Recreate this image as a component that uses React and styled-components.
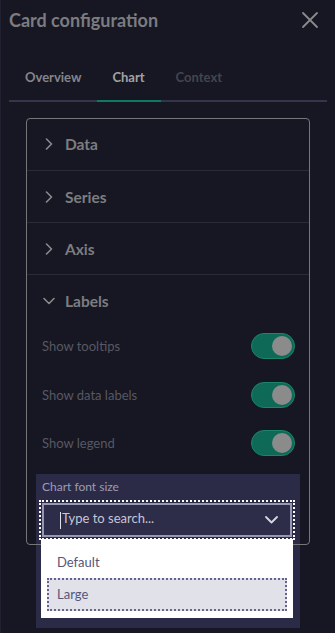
import React from 'react';
import styled, { createGlobalStyle } from 'styled-components';

const GlobalStyle = createGlobalStyle`
  html, body {
    margin: 0;
    padding: 0;
    background: #161722;
  }
  * {
    box-sizing: border-box;
  }
`;

const Panel = styled.div`
  width: 335px;
  height: 633px;
  background: #161722;
  font-family: Lato, 'Open Sans', sans-serif;
  overflow: hidden;
  border-left: 1px solid #202131;
`;

const Header = styled.div`
  height: 39px;
  display: flex;
  align-items: center;
  justify-content: space-between;
  padding: 1px 16px 0 8px;
`;

const Title = styled.h1`
  margin: 0;
  font-size: 18px;
  font-weight: 700;
  color: #7c7c80;
`;

const CloseButton = styled.button`
  background: none;
  border: none;
  padding: 0;
  width: 18px;
  height: 18px;
  display: flex;
  cursor: pointer;
`;

const TabBar = styled.div`
  display: flex;
  margin: 15px 8px 0;
  border-bottom: 2px solid #34354a;
`;

const Tab = styled.div`
  padding: 0 16px 0 ${(p) => (p.first ? '16px' : '15px')};
  height: 48px;
  display: flex;
  align-items: center;
  font-size: 13px;
  font-weight: 700;
  margin-bottom: -2px;
  border-bottom: 2px solid ${(p) => (p.active ? '#0e7a60' : 'transparent')};
  color: ${(p) => (p.active ? '#a2a2a6' : p.disabled ? '#44454f' : '#85858a')};
`;

const Box = styled.div`
  position: relative;
  margin: 16px 25px 0;
  height: 427px;
  border-radius: 4px;

  &::after {
    content: '';
    position: absolute;
    inset: 0;
    border: 1.5px solid #76767a;
    border-radius: 4px;
    pointer-events: none;
    z-index: 1;
  }
`;

const Section = styled.div`
  border-top: ${(p) => (p.first ? 'none' : '1px solid #2a2b38')};
`;

const SectionHead = styled.div`
  height: ${(p) => (p.first ? '52px' : '51px')};
  display: flex;
  align-items: center;
  gap: 10px;
  padding-left: 17px;
  font-size: 15.5px;
  font-weight: 700;
  color: #7d7d80;
`;

const SectionBody = styled.div`
  padding: 7px 15px 0 16px;
  display: flex;
  flex-direction: column;
  gap: 22.5px;
`;

const ToggleRow = styled.div`
  display: flex;
  align-items: center;
  justify-content: space-between;
  height: 26px;
  font-size: 13px;
  color: #585863;
`;

const Track = styled.div`
  width: 44px;
  height: 26px;
  border-radius: 13px;
  background: #0e6a57;
  border: 1.5px solid #1a8569;
  display: flex;
  align-items: center;
  justify-content: flex-end;
  padding-right: 2px;
`;

const Knob = styled.div`
  width: 20px;
  height: 20px;
  border-radius: 50%;
  background: #8b8b8b;
`;

const FieldCard = styled.div`
  margin: -5px -5px 0 -6px;
  padding: 6px 8px 10px 6px;
  background: #2c2b47;
  height: 154px;
`;

const FieldLabel = styled.div`
  font-size: 12px;
  color: #9d9cb4;
  line-height: 14px;
  margin-bottom: 9px;
`;

const SelectWrap = styled.div`
  position: relative;
`;

const SelectInput = styled.div`
  height: 34px;
  border: 2px solid #9897b3;
  background: #2d2c49;
  outline: 2px dotted #ffffff;
  outline-offset: 1px;
  display: flex;
  align-items: center;
  justify-content: space-between;
  padding: 0 12px 0 16px;
  font-size: 13px;
  color: #c6c6d6;
`;

const Caret = styled.span`
  display: inline-block;
  width: 1px;
  height: 17px;
  background: #e0e0ea;
  margin-right: 1px;
  vertical-align: middle;
`;

const Menu = styled.div`
  position: absolute;
  z-index: 2;
  left: -1px;
  right: -1px;
  top: 36px;
  background: #ffffff;
  padding: 8px 6px 7px;
`;

const Option = styled.div`
  height: ${(p) => (p.selected ? '33px' : '31px')};
  display: flex;
  align-items: center;
  padding-left: ${(p) => (p.selected ? '8px' : '10px')};
  font-size: 13px;
  color: #56557a;
  background: ${(p) => (p.selected ? '#e1e1ea' : 'transparent')};
  border: ${(p) => (p.selected ? '2px dotted #67628c' : 'none')};
`;

const Chevron = ({ open }) => (
  <svg width="12" height="12" viewBox="0 0 12 12" fill="none">
    <path
      d={open ? 'M1 3.5 L6 8.5 L11 3.5' : 'M3.5 1 L8.5 6 L3.5 11'}
      stroke="#8a8a8c"
      strokeWidth="1.6"
      strokeLinecap="round"
      strokeLinejoin="round"
    />
  </svg>
);

const sections = ['Data', 'Series', 'Axis'];
const toggles = ['Show tooltips', 'Show data labels', 'Show legend'];

function App() {
  return (
    <>
      <GlobalStyle />
      <Panel>
        <Header>
          <Title>Card configuration</Title>
          <CloseButton>
            <svg width="18" height="18" viewBox="0 0 18 18">
              <path d="M2 2 L16 16 M16 2 L2 16" stroke="#8a8a8c" strokeWidth="1.8" strokeLinecap="round" />
            </svg>
          </CloseButton>
        </Header>
        <TabBar>
          <Tab first>Overview</Tab>
          <Tab active>Chart</Tab>
          <Tab disabled>Context</Tab>
        </TabBar>
        <Box>
          {sections.map((s, i) => (
            <Section key={s} first={i === 0}>
              <SectionHead first={i === 0}>
                <Chevron />
                {s}
              </SectionHead>
            </Section>
          ))}
          <Section>
            <SectionHead open>
              <Chevron open />
              Labels
            </SectionHead>
            <SectionBody>
              {toggles.map((t) => (
                <ToggleRow key={t}>
                  {t}
                  <Track>
                    <Knob />
                  </Track>
                </ToggleRow>
              ))}
              <FieldCard>
                <FieldLabel>Chart font size</FieldLabel>
                <SelectWrap>
                  <SelectInput>
                    <span>
                      <Caret />
                      Type to search...
                    </span>
                    <svg width="13" height="8" viewBox="0 0 13 8">
                      <path d="M1 1 L6.5 6.5 L12 1" stroke="#d6d6e2" strokeWidth="1.8" fill="none" strokeLinecap="round" strokeLinejoin="round" />
                    </svg>
                  </SelectInput>
                  <Menu>
                    <Option>Default</Option>
                    <Option selected>Large</Option>
                  </Menu>
                </SelectWrap>
              </FieldCard>
            </SectionBody>
          </Section>
        </Box>
      </Panel>
    </>
  );
}

export default App;
